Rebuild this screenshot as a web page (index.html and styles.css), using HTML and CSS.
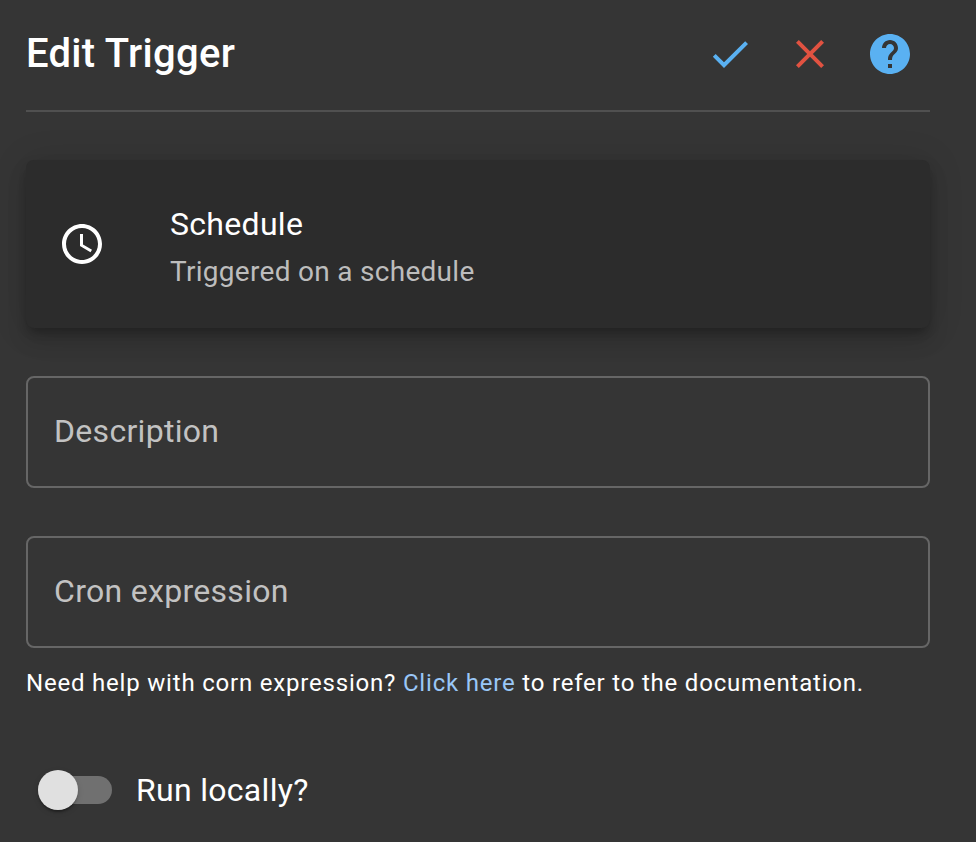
FILE: index.html
```html
<!DOCTYPE html>
<html lang="en">
<head>
<meta charset="utf-8">
<title>Edit Trigger</title>
<link rel="stylesheet" href="styles.css">
</head>
<body>
<main class="panel">
  <header class="header">
    <h1 class="title">Edit Trigger</h1>
    <div class="actions">
      <svg class="icon confirm" viewBox="0 0 24 24"><path d="M9 16.17 4.83 12l-1.42 1.41L9 19 21 7l-1.41-1.41z"/></svg>
      <svg class="icon cancel" viewBox="0 0 24 24"><path d="M19 6.41 17.59 5 12 10.59 6.41 5 5 6.41 10.59 12 5 17.59 6.41 19 12 13.41 17.59 19 19 17.59 13.41 12z"/></svg>
      <svg class="icon help" viewBox="0 0 24 24"><path d="M12 2C6.48 2 2 6.48 2 12s4.48 10 10 10 10-4.48 10-10S17.52 2 12 2zm1 17h-2v-2h2v2zm2.07-7.75-.9.92C13.45 12.9 13 13.5 13 15h-2v-.5c0-1.1.45-2.1 1.17-2.83l1.24-1.26c.37-.36.59-.86.59-1.41 0-1.1-.9-2-2-2s-2 .9-2 2H8c0-2.21 1.79-4 4-4s4 1.79 4 4c0 .88-.36 1.68-.93 2.25z"/></svg>
    </div>
  </header>
  <section class="card">
    <svg class="icon" viewBox="0 0 24 24"><path d="M11.99 2C6.47 2 2 6.48 2 12s4.47 10 9.99 10C17.52 22 22 17.52 22 12S17.52 2 11.99 2zM12 20c-4.42 0-8-3.58-8-8s3.58-8 8-8 8 3.58 8 8-3.58 8-8 8zm.5-13H11v6l5.25 3.15.75-1.23-4.5-2.67z"/></svg>
    <div class="card-text">
      <div class="card-title">Schedule</div>
      <div class="card-sub">Triggered on a schedule</div>
    </div>
  </section>
  <div class="field"><span class="field-label">Description</span></div>
  <div class="field"><span class="field-label">Cron expression</span></div>
  <p class="hint">Need help with corn expression? <a class="link">Click here</a> to refer to the documentation.</p>
  <div class="toggle-row">
    <div class="switch"><div class="thumb"></div></div>
    <span class="toggle-label">Run locally?</span>
  </div>
</main>
</body>
</html>
```
FILE: styles.css
```css
* { box-sizing: border-box; }
body {
  margin: 0;
  background: #353535;
  color: #fff;
  font-family: Roboto, sans-serif;
  overflow: hidden;
}
.panel { height: 842px; padding: 0 46px 0 26px; }
.header {
  display: flex;
  align-items: center;
  justify-content: space-between;
  height: 112px;
  padding-bottom: 2px;
  border-bottom: 2px solid #505050;
}
.title {
  margin: 0;
  font-size: 40px;
  font-weight: 500;
  line-height: 48px;
  letter-spacing: 0.3px;
}
.actions { display: flex; gap: 32px; margin-right: 16px; }
.icon { display: block; width: 48px; height: 48px; fill: currentColor; }
.confirm { color: #5ab1f2; }
.cancel { color: #e15241; }
.help { color: #5ab1f2; }
.card {
  display: flex;
  align-items: center;
  height: 168px;
  margin: 48px 0;
  padding-left: 32px;
  border-radius: 8px;
  background: #2c2c2c;
  box-shadow: 0 6px 10px -2px rgba(0,0,0,.2), 0 12px 20px 0 rgba(0,0,0,.14), 0 2px 36px 0 rgba(0,0,0,.12);
}
.card-text { margin-left: 64px; padding-top: 4px; }
.card-title { font-size: 32px; line-height: 48px; letter-spacing: 0.3px; }
.card-sub { font-size: 28px; line-height: 40px; letter-spacing: 0.29px; color: #bdbdbd; padding-top: 4px; }
.field {
  display: flex;
  align-items: center;
  height: 112px;
  padding: 0 0 2px 26px;
  border: 2px solid #666;
  border-radius: 8px;
}
.field + .field { margin-top: 48px; }
.field-label { font-size: 32px; line-height: 40px; letter-spacing: 0.3px; color: #c2c2c2; }
.hint {
  margin: 15px 0 0;
  font-size: 24px;
  line-height: 40px;
  letter-spacing: 0.8px;
  white-space: nowrap;
}
.link { color: #9ac7f7; }
.toggle-row { display: flex; align-items: center; height: 76px; margin-top: 49px; padding-left: 12px; }
.switch { display: flex; align-items: center; width: 74px; height: 28px; border-radius: 14px; background: #707070; }
.thumb { width: 40px; height: 40px; flex: none; border-radius: 50%; background: #e0e0e0; box-shadow: 0 4px 2px -2px rgba(0,0,0,.2), 0 2px 2px 0 rgba(0,0,0,.14), 0 2px 6px 0 rgba(0,0,0,.12); }
.toggle-label { margin-left: 24px; font-size: 32px; line-height: 48px; letter-spacing: 0.3px; }
```
